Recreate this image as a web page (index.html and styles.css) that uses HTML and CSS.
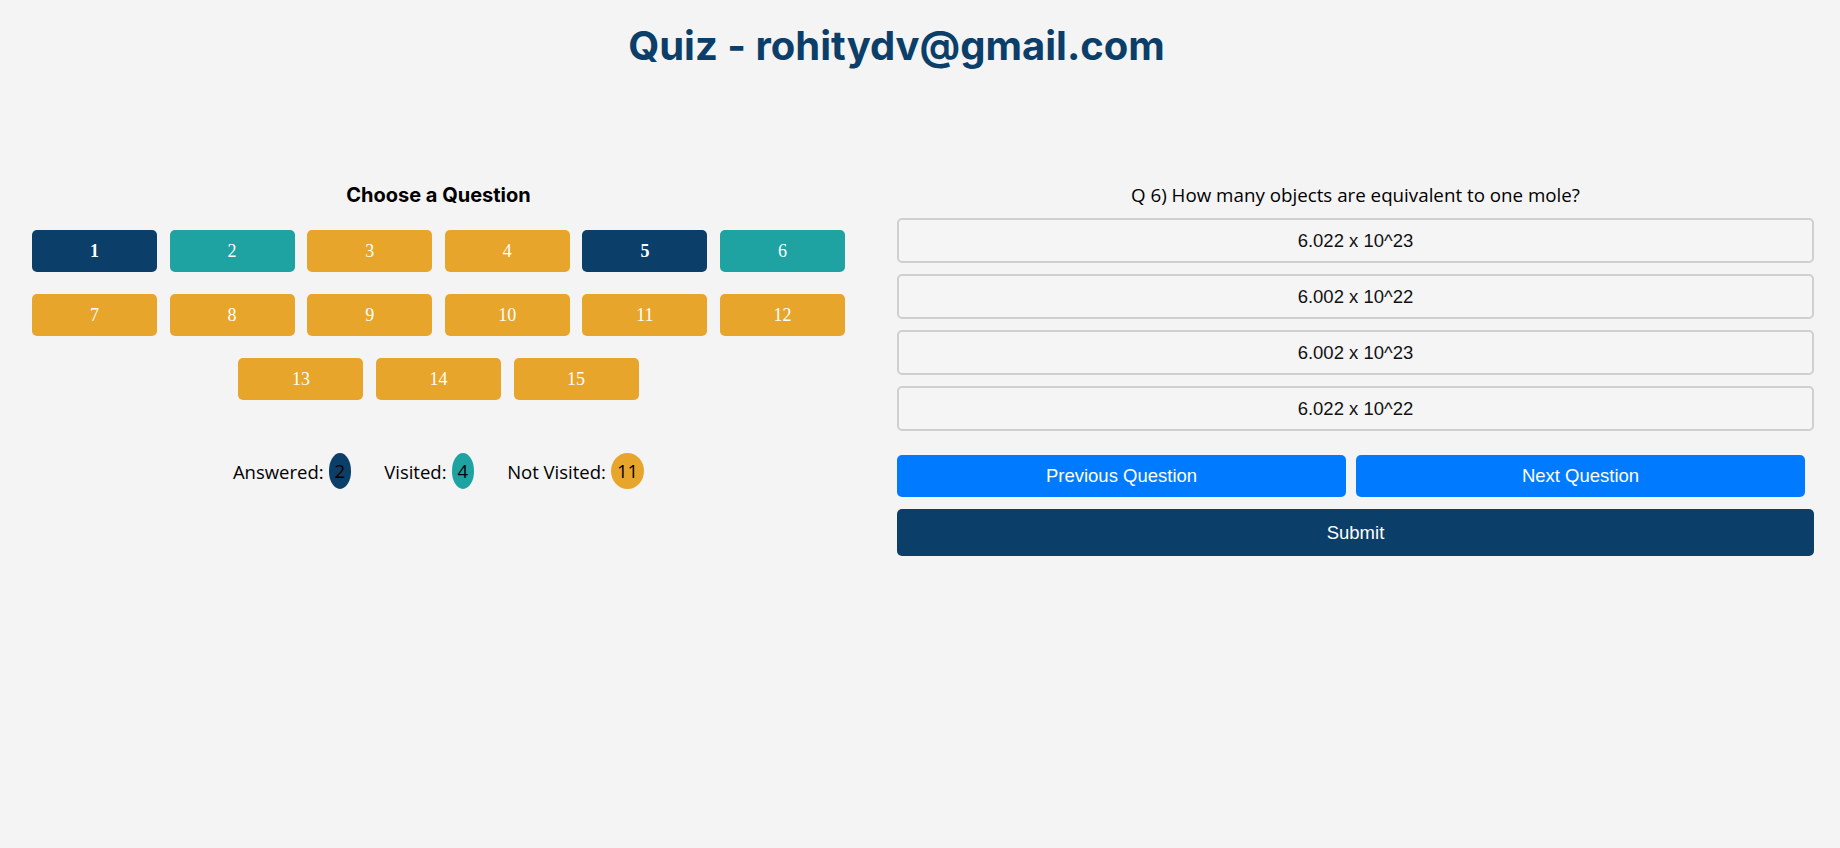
FILE: index.html
```html
<!DOCTYPE html>
<html lang="en">
<head>
<meta charset="utf-8">
<title>Quiz</title>
<link rel="stylesheet" href="styles.css">
</head>
<body>
<header class="header">
  <h1 class="title">Quiz - rohitydv@gmail.com</h1>
</header>
<main class="layout">
  <section class="panel">
    <h3 class="panel-title">Choose a Question</h3>
    <div class="qgrid">
      <button class="qbtn answered">1</button>
      <button class="qbtn visited">2</button>
      <button class="qbtn">3</button>
      <button class="qbtn">4</button>
      <button class="qbtn answered">5</button>
      <button class="qbtn visited">6</button>
      <button class="qbtn">7</button>
      <button class="qbtn">8</button>
      <button class="qbtn">9</button>
      <button class="qbtn">10</button>
      <button class="qbtn">11</button>
      <button class="qbtn">12</button>
      <button class="qbtn">13</button>
      <button class="qbtn">14</button>
      <button class="qbtn">15</button>
    </div>
    <div class="legend">
      <span class="legend-item">Answered: <span class="badge answered">2</span></span>
      <span class="legend-item">Visited: <span class="badge visited">4</span></span>
      <span class="legend-item">Not Visited: <span class="badge">11</span></span>
    </div>
  </section>
  <section class="question">
    <p class="qtext">Q 6) How many objects are equivalent to one mole?</p>
    <div class="options">
      <button class="option">6.022 x 10^23</button>
      <button class="option">6.002 x 10^22</button>
      <button class="option">6.002 x 10^23</button>
      <button class="option">6.022 x 10^22</button>
    </div>
    <div class="nav">
      <button class="nav-btn">Previous Question</button>
      <button class="nav-btn">Next Question</button>
    </div>
    <button class="submit">Submit</button>
  </section>
</main>
</body>
</html>
```

FILE: styles.css
```css
* { box-sizing: border-box; }

body {
  margin: 0;
  background: #f4f4f4;
  font-family: "Open Sans", "Liberation Sans", sans-serif;
  color: #000;
}

.header {
  display: flex;
  justify-content: center;
  padding-right: 47px;
}

.title {
  margin: 22px 0 0;
  font-family: "Inter", "Liberation Sans", sans-serif;
  font-weight: 700;
  font-size: 40px;
  line-height: 48px;
  color: #0b3f69;
}

.layout {
  display: flex;
  padding-top: 110px;
}

.panel {
  width: 877px;
  text-align: center;
}

.panel-title {
  margin: 0;
  font-family: "Inter", "Liberation Sans", sans-serif;
  font-weight: 700;
  font-size: 20px;
  line-height: 26px;
  padding-top: 2px;
}

.qgrid {
  display: flex;
  flex-wrap: wrap;
  justify-content: center;
  gap: 22px 12.6px;
  width: 813px;
  margin: 22px auto 0;
}

.qbtn {
  width: 125px;
  height: 42px;
  border: none;
  border-radius: 5px;
  background: #e8a52b;
  color: #fff;
  font-family: "Liberation Serif", serif;
  font-size: 18px;
  padding: 0;
}

.qbtn.answered {
  background: #0b3f69;
  font-weight: 700;
}

.qbtn.visited {
  background: #1ea2a2;
}

.legend {
  display: flex;
  justify-content: center;
  align-items: center;
  gap: 33px;
  margin-top: 53px;
  font-size: 18.5px;
}

.legend-item {
  display: flex;
  align-items: center;
  gap: 5px;
}

.badge {
  display: inline-block;
  padding: 6px;
  border-radius: 50%;
  background: #e8a52b;
  line-height: 24px;
  color: #000;
}

.badge.answered { background: #0b3f69; }
.badge.visited { background: #1ea2a2; }

.question {
  width: 917px;
  margin-left: 20px;
  display: flex;
  flex-direction: column;
}

.qtext {
  margin: 0;
  text-align: center;
  font-size: 18.75px;
  line-height: 26px;
  padding-top: 2px;
}

.options {
  display: flex;
  flex-direction: column;
  gap: 11px;
  margin-top: 10px;
}

.option {
  height: 45px;
  border: 2px solid #cfcfcf;
  border-radius: 5px;
  background: #f5f5f5;
  font-family: "Liberation Sans", Arial, sans-serif;
  font-size: 18.5px;
  color: #111;
}

.nav {
  display: flex;
  gap: 10px;
  margin-top: 24px;
}

.nav-btn {
  width: 449px;
  height: 42px;
  border: none;
  border-radius: 5px;
  background: #007bff;
  color: #fff;
  font-family: "Liberation Sans", Arial, sans-serif;
  font-size: 18.5px;
}

.submit {
  margin-top: 12px;
  height: 47px;
  border: none;
  border-radius: 5px;
  background: #0b3f69;
  color: #fff;
  font-family: "Liberation Sans", Arial, sans-serif;
  font-size: 18.5px;
}
```
